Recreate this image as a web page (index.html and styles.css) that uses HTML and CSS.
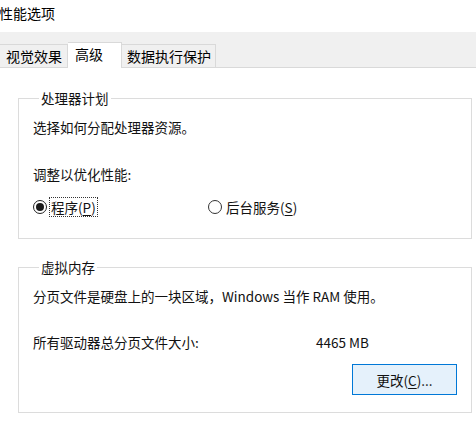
FILE: index.html
```html
<!DOCTYPE html>
<html lang="zh-CN">
<head>
<meta charset="utf-8">
<title>性能选项</title>
<link rel="stylesheet" href="styles.css">
</head>
<body>
<div class="window">
  <div class="titlebar">性能选项</div>
  <div class="tabstrip">
    <div class="tab tab-first">视觉效果</div>
    <div class="tab tab-active">高级</div>
    <div class="tab tab-last">数据执行保护</div>
  </div>
  <div class="content">
    <fieldset class="group group-cpu">
      <legend class="legend">处理器计划</legend>
      <p class="line line-intro">选择如何分配处理器资源。</p>
      <p class="line line-adjust">调整以优化性能:</p>
      <div class="radios">
        <label class="radio radio-first">
          <span class="circle checked"><span class="dot"></span></span>
          <span class="rtext focus">程序(<u>P</u>)</span>
        </label>
        <label class="radio">
          <span class="circle"></span>
          <span class="rtext">后台服务(<u>S</u>)</span>
        </label>
      </div>
    </fieldset>
    <fieldset class="group group-vm">
      <legend class="legend">虚拟内存</legend>
      <p class="line line-intro">分页文件是硬盘上的一块区域，Windows 当作 RAM 使用。</p>
      <div class="line line-size">
        <span class="size-label">所有驱动器总分页文件大小:</span>
        <span class="size-value">4465 MB</span>
      </div>
      <div class="btnrow">
        <button class="btn">更改(<u>C</u>)...</button>
      </div>
    </fieldset>
  </div>
</div>
</body>
</html>
```

FILE: styles.css
```css
html, body {
  margin: 0;
  padding: 0;
  background: #ffffff;
}
body {
  font-family: "Noto Sans CJK SC", "Noto Sans", sans-serif;
  font-size: 13.5px;
  color: #111111;
  width: 476px;
  height: 423px;
  overflow: hidden;
}
.window {
  width: 476px;
}
.titlebar {
  height: 32px;
  line-height: 27px;
  font-size: 14px;
  margin-left: -1px;
  color: #000;
}
.tabstrip {
  background: #f0f0f0;
  border-bottom: 1px solid #d9d9d9;
  display: flex;
  align-items: flex-end;
  box-sizing: border-box;
  height: 36px;
}
.tab {
  height: 23px;
  line-height: 22px;
  font-size: 14px;
  padding: 0 4px 0 6px;
  border: 1px solid #d9d9d9;
  border-bottom: none;
  border-left: none;
  background: #f0f0f0;
  box-sizing: border-box;
  color: #000;
}
.tab-first {
  width: 68px;
  padding-left: 6px;
}
.tab-active {
  width: 54px;
  height: 26px;
  line-height: 22px;
  background: #ffffff;
  margin-bottom: -1px;
  padding-left: 7px;
}
.tab-last {
  width: 94px;
  padding-left: 5px;
}
.content {
  padding: 21px 4px 0 18px;
}
.group {
  margin: 0;
  border: 1px solid #dcdcdc;
  padding: 0 14px;
  min-width: 0;
  box-sizing: border-box;
}
.legend {
  padding: 0 2px;
  margin-left: 6px;
  line-height: 18px;
  height: 18px;
  font-size: 13.5px;
}
.line {
  margin: 0;
  line-height: 18px;
  height: 18px;
  white-space: nowrap;
}
.line-intro {
  margin-top: 11px;
}
.group-cpu {
  height: 150px;
}
.line-adjust {
  margin-top: 29px;
}
.radios {
  display: flex;
  margin-top: 14px;
  height: 20px;
  align-items: center;
}
.radio {
  display: flex;
  align-items: center;
}
.radio-first {
  width: 175px;
}
.circle {
  width: 14px;
  height: 14px;
  border: 1px solid #333333;
  border-radius: 50%;
  box-sizing: border-box;
  display: flex;
  align-items: center;
  justify-content: center;
  background: #fff;
}
.circle.checked {
  border-width: 1.5px;
  border-color: #222;
}
.dot {
  width: 8px;
  height: 8px;
  border-radius: 50%;
  background: #1a1a1a;
}
.rtext {
  margin-left: 3px;
  line-height: 18px;
  padding: 0 1px;
}
.focus {
  outline: 1px dotted #333;
  outline-offset: 0;
}
.rtext u {
  text-decoration-thickness: 1px;
  text-underline-offset: 2px;
}
.group-vm {
  margin-top: 19px;
  height: 155px;
}
.line-size {
  display: flex;
  margin-top: 28px;
}
.size-label {
  width: 283px;
}
.btnrow {
  display: flex;
  justify-content: flex-end;
  margin-top: 13px;
}
.btn {
  width: 105px;
  height: 31px;
  border: 1px solid #0078d7;
  background: #e5f1fb;
  font-family: inherit;
  font-size: 13.5px;
  color: #111;
  padding: 0;
  margin: 0;
}
.btn u {
  text-underline-offset: 2px;
}
```
